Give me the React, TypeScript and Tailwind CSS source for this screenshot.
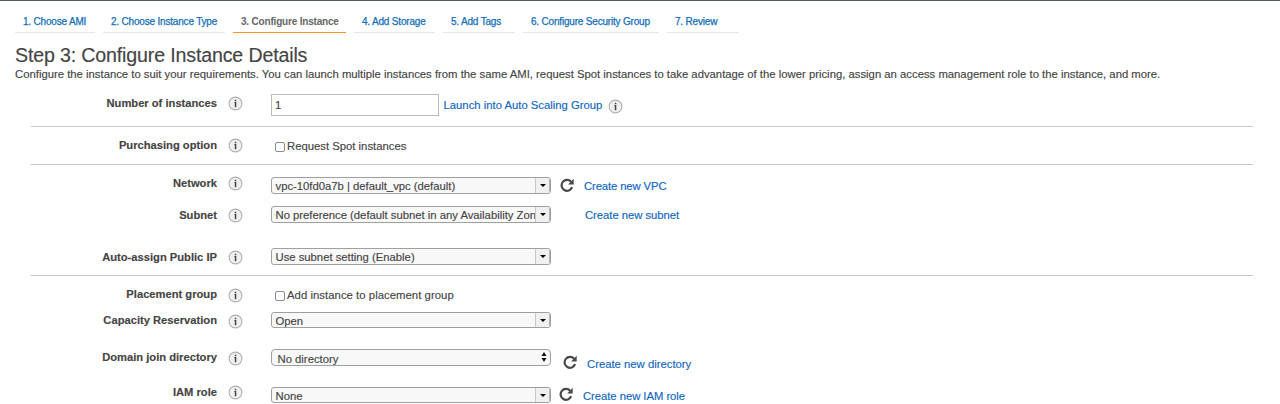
import type { ReactNode } from "react";

type Tab = { label: string; className: string; active?: boolean };

const tabs: Tab[] = [
  { label: "1. Choose AMI", className: "w-20" },
  { label: "2. Choose Instance Type", className: "w-[122px]" },
  { label: "3. Configure Instance", className: "w-[113px]", active: true },
  { label: "4. Add Storage", className: "w-[81px]" },
  { label: "5. Add Tags", className: "w-[72px]" },
  { label: "6. Configure Security Group", className: "w-[136px]" },
  { label: "7. Review", className: "w-[72px]" },
];

function InfoIcon({ className = "" }: { className?: string }) {
  return (
    <svg viewBox="0 0 15 15" className={`h-[15px] w-[15px] shrink-0 ${className}`} aria-hidden="true">
      <circle cx="7.5" cy="7.5" r="6.4" fill="#f0f0f0" stroke="#b0b0b0" strokeWidth="1.1" />
      <path d="M6.8 3.7h1.5v1.5H6.8zM6.2 6h2.1v5.2H6.8V6.8h-.6z" fill="#444" />
    </svg>
  );
}

function RefreshIcon({ className = "" }: { className?: string }) {
  return (
    <svg viewBox="0 0 14 14" className={`h-3.5 w-3.5 shrink-0 ${className}`} aria-hidden="true">
      <path d="M11.1 3.8A5.4 5.4 0 1 0 12.1 9.2" fill="none" stroke="#484848" strokeWidth="2.2" />
      <path d="M13.7 .8v5.6H8.1z" fill="#484848" />
    </svg>
  );
}

function Link({ children, className = "" }: { children: ReactNode; className?: string }) {
  return (
    <a href="#" className={`shrink-0 whitespace-nowrap text-[#1166bb] [-webkit-text-stroke:0.15px_#1166bb] ${className}`}>
      {children}
    </a>
  );
}

function Select({ value, className = "" }: { value: string; className?: string }) {
  return (
    <div
      className={`flex w-[280px] shrink-0 overflow-hidden rounded-[3px] border border-[#a0a0a0] bg-[#f8f8f8] ${className}`}
    >
      <span className="h-full min-w-0 flex-1 pl-[3.5px] leading-[17px] tracking-[-0.01px] whitespace-nowrap">{value}</span>
      <span className="flex w-[15px] shrink-0 items-center justify-center border-r border-l border-r-[#b4b4b4] border-l-[#c8c8c8] bg-[#f0f0f0]">
        <svg viewBox="0 0 6 3" className="h-[3px] w-1.5" aria-hidden="true">
          <path d="M0 0h6L3 3z" fill="#000" />
        </svg>
      </span>
    </div>
  );
}

function Checkbox({ label, className = "" }: { label: string; className?: string }) {
  return (
    <label className={`flex items-start pl-1 ${className}`}>
      <input
        type="checkbox"
        className="mt-1 h-2.5 w-2.5 appearance-none rounded-[2px] border border-[#8c8c8c] bg-white"
      />
      <span className="ml-[2px] leading-4 whitespace-nowrap">{label}</span>
    </label>
  );
}

function Row({
  label,
  className,
  labelClass,
  iconClass,
  children,
}: {
  label: string;
  className: string;
  labelClass: string;
  iconClass: string;
  children: ReactNode;
}) {
  return (
    <div className={`flex items-start ${className}`}>
      <span className={`w-[186px] shrink-0 text-right text-[11.18px] font-bold ${labelClass}`}>{label}</span>
      <InfoIcon className={`mr-7 ml-[11px] ${iconClass}`} />
      {children}
    </div>
  );
}

export default function App() {
  return (
    <div className="h-[404px] w-full overflow-hidden border-t border-[#545b6a] bg-white font-['Liberation_Sans',Arial,sans-serif] text-[11.3px] leading-4 text-[#444] [-webkit-text-stroke:0.15px_#444]">
      <nav className="flex h-8 gap-2 pl-[15px]">
        {tabs.map((tab) => (
          <a
            key={tab.label}
            href="#"
            className={`flex items-start border-b pt-[13px] pl-2 text-[10px] tracking-[-0.19px] whitespace-nowrap ${tab.className} ${
              tab.active
                ? "border-[#f7981f] font-bold text-[#666] [-webkit-text-stroke:0]"
                : "border-[#e6e6e6] text-[#146eb4] [-webkit-text-stroke:0.25px_#146eb4]"
            }`}
          >
            {tab.label}
          </a>
        ))}
      </nav>
      <header className="h-[55px] pl-[15px] pt-[10px] whitespace-nowrap">
        <h1 className="h-[23px] text-[19.6px] leading-6 tracking-[-0.15px]">Step 3: Configure Instance Details</h1>
        <p className="tracking-[0.005px]">
          Configure the instance to suit your requirements. You can launch multiple instances from the same AMI, request
          Spot instances to take advantage of the lower pricing, assign an access management role to the instance, and
          more.
        </p>
      </header>
      <main className="ml-[31px] w-[1222px]">
        <section className="h-[39px] border-b border-[#c8c8c8]">
          <Row label="Number of instances" className="h-[38px]" labelClass="mt-[7px]" iconClass="mt-2">
            <input
              defaultValue="1"
              className="mt-1.5 h-[22px] w-[168px] shrink-0 border border-[#bbb] bg-white pl-[3px] text-[11.3px]"
            />
            <Link className="mt-[9px] ml-[4.5px]">Launch into Auto Scaling Group</Link>
            <InfoIcon className="mt-[11px] ml-1.5" />
          </Row>
        </section>
        <section className="h-[38px] border-b border-[#c8c8c8]">
          <Row label="Purchasing option" className="h-[37px]" labelClass="mt-[10px]" iconClass="mt-[11px]">
            <Checkbox label="Request Spot instances" className="mt-[11px]" />
          </Row>
        </section>
        <section className="h-[111px] border-b border-[#c8c8c8]">
          <Row label="Network" className="h-[35px]" labelClass="mt-[10px]" iconClass="mt-[11px]">
            <Select value="vpc-10fd0a7b | default_vpc (default)" className="mt-3 h-[17px]" />
            <RefreshIcon className="mt-[13px] ml-[9px]" />
            <Link className="mt-[13px] ml-[10px] tracking-[-0.12px]">Create new VPC</Link>
          </Row>
          <Row label="Subnet" className="h-9" labelClass="mt-[7px]" iconClass="mt-2">
            <Select value="No preference (default subnet in any Availability Zon" className="mt-1.5 h-[17px]" />
            <Link className="mt-[7px] ml-[34px] tracking-[-0.04px]">Create new subnet</Link>
          </Row>
          <Row label="Auto-assign Public IP" className="h-[39px]" labelClass="mt-[13px]" iconClass="mt-[14px]">
            <Select value="Use subnet setting (Enable)" className="mt-3 h-[17px] tracking-[-0.08px]" />
          </Row>
        </section>
        <section>
          <Row label="Placement group" className="h-[30px]" labelClass="mt-[10px]" iconClass="mt-3">
            <Checkbox label="Add instance to placement group" className="mt-[11px] tracking-[0.05px]" />
          </Row>
          <Row label="Capacity Reservation" className="h-[30px]" labelClass="mt-[6px]" iconClass="mt-2">
            <Select value="Open" className="mt-1.5 h-4" />
          </Row>
          <Row label="Domain join directory" className="h-10" labelClass="mt-[13px]" iconClass="mt-[15px]">
            <div className="mt-[13px] flex h-[17px] w-[280px] shrink-0 items-center justify-between rounded-[4px] border border-[#a0a0a0] bg-[#f8f8f8] pr-[3px] pl-[5.5px]">
              <span className="pt-[3px]">No directory</span>
              <svg viewBox="0 0 6 10" className="mb-px h-2.5 w-1.5" aria-hidden="true">
                <path d="M3 0l2.5 4h-5zM3 10L.5 6h5z" fill="#111" />
              </svg>
            </div>
            <RefreshIcon className="mt-[19px] ml-3" />
            <Link className="mt-5 ml-[10px]">Create new directory</Link>
          </Row>
          <Row label="IAM role" className="h-7" labelClass="mt-2" iconClass="mt-[9px]">
            <Select value="None" className="mt-[11px] h-4" />
            <RefreshIcon className="mt-[11px] ml-2" />
            <Link className="mt-3 ml-[10px] tracking-[-0.05px]">Create new IAM role</Link>
          </Row>
        </section>
      </main>
    </div>
  );
}
